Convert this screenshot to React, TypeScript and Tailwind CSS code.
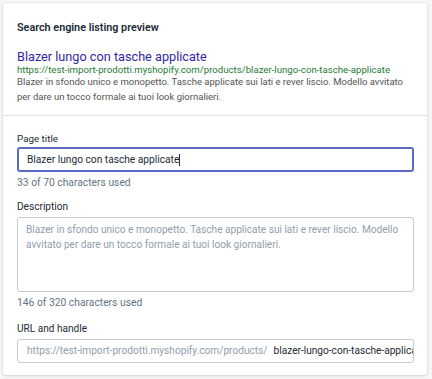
export default function App() {
    return (
        <div className="w-[432px] h-[379px] bg-[#f4f6f8] pt-[3px] pl-[3px] overflow-hidden" style={{fontFamily: "Roboto, 'Noto Sans', sans-serif"}}>
            <div className="w-[424px] h-[372px] bg-white rounded-[3px] shadow-[0_0_0_1px_rgba(63,63,68,0.05),0_1px_3px_0_rgba(63,63,68,0.15)]">
                <div className="px-[14px] pt-[15px] pb-[11px] border-b border-[#dfe3e8]">
                    <h2 className="text-[10.8px] leading-[20px] font-semibold text-[#212b36]">Search engine listing preview</h2>
                    <div className="mt-[10px] text-[12.7px] leading-[18px] text-[#3326a6]">Blazer lungo con tasche applicate</div>
                    <div className="-mt-[2px] text-[9.65px] leading-[12px] text-[#1e7b34] whitespace-nowrap">https://test-import-prodotti.myshopify.com/products/blazer-lungo-con-tasche-applicate</div>
                    <p className="-mt-[2px] text-[9.5px] leading-[15px] text-[#545454]">Blazer in sfondo unico e monopetto. Tasche applicate sui lati e rever liscio. Modello avvitato per dare un tocco formale ai tuoi look giornalieri.</p>
                </div>

                <div className="px-[14px] pt-[15px] flex flex-col">
                    <label className="text-[9.8px] leading-[16px] text-[#212b36]">Page title</label>
                    <div className="h-[25px] w-[397px] border-2 border-[#5c6ac4] rounded-[3px] flex items-center pl-[8px] text-[10.2px] text-[#212b36]">
                        <span>Blazer lungo con tasche applicate</span>
                        <span className="w-px h-[12px] bg-[#212b36]" />
                    </div>
                    <div className="mt-[3px] text-[10.3px] leading-[16px] text-[#637381]">33 of 70 characters used</div>

                    <label className="mt-[8px] text-[10.1px] leading-[16px] text-[#212b36]">Description</label>
                    <div className="mt-[2px] h-[75px] w-[397px] border border-[#c4cdd5] rounded-[3px] pl-[8px] pr-[4px] pt-[5px] text-[10.1px] leading-[14.5px] text-[#919eab]">
                        Blazer in sfondo unico e monopetto. Tasche applicate sui lati e rever liscio. Modello avvitato per dare un tocco formale ai tuoi look giornalieri.
                    </div>
                    <div className="mt-[3px] text-[10.3px] leading-[16px] text-[#637381]">146 of 320 characters used</div>

                    <label className="mt-[10px] text-[10.1px] leading-[16px] text-[#212b36]">URL and handle</label>
                    <div className="mt-[2px] h-[24px] w-[397px] border border-[#c4cdd5] rounded-[3px] flex items-center pl-[9px] overflow-hidden whitespace-nowrap text-[10.15px]">
                        <span className="text-[#919eab]">https://test-import-prodotti.myshopify.com/products/</span>
                        <span className="ml-[6px] text-[#212b36]">blazer-lungo-con-tasche-applicate</span>
                    </div>
                </div>
            </div>
        </div>
    );
}
